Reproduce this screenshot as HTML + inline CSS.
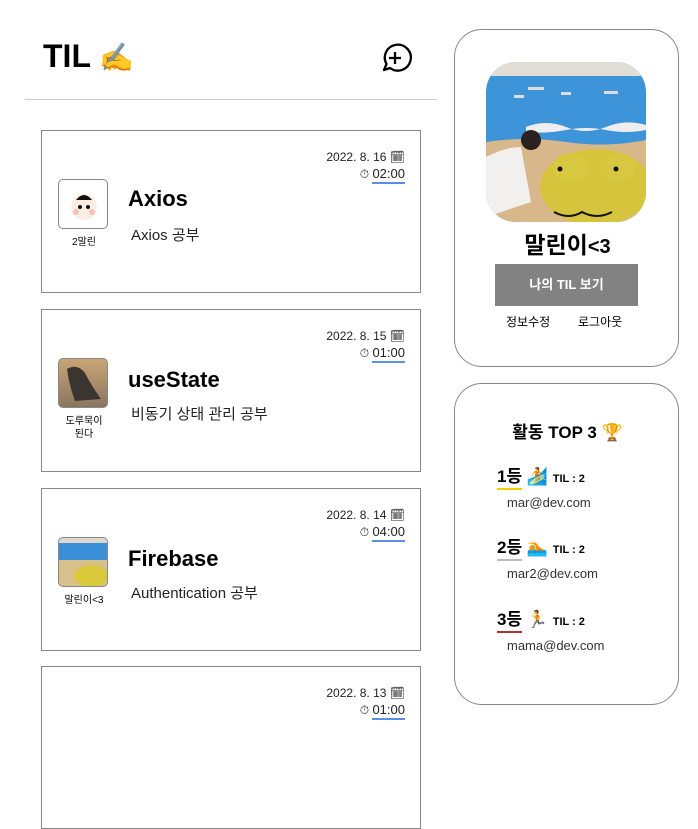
<!DOCTYPE html>
<html><head><meta charset="utf-8"><style>
*{margin:0;padding:0;box-sizing:border-box}
body{width:698px;height:722px;overflow:hidden;background:#fff;font-family:"Liberation Sans","Noto Sans CJK KR",sans-serif;color:#000;position:relative}
.a{position:absolute}
.card{position:absolute;left:41px;width:380px;height:163px;border:1px solid #888;background:#fff}
.av{position:absolute;left:16px;top:48px;width:50px;height:50px;border:1px solid #888;border-radius:5px;overflow:hidden}
.nm{position:absolute;left:10px;width:64px;text-align:center;font-size:10px;line-height:13px}
.tt{position:absolute;left:86px;font-size:22px;font-weight:bold}
.ds{position:absolute;left:89px;font-size:15px;color:#222}
.dt{position:absolute;right:15px;top:18px;font-size:12px;text-align:right;line-height:17px;color:#222}
.tm{display:inline-block;border-bottom:2px solid #5b8ee6;font-size:13px;line-height:16px}
.box{position:absolute;left:454px;width:225px;border:1px solid #888;border-radius:28px}
.rk{position:absolute;left:42px;font-size:17px;font-weight:bold}
.rk span.u{display:inline-block;padding-bottom:1px;border-bottom:2px solid}
.em{font-size:13px;color:#333;position:absolute;left:52px}
</style></head><body>
<div class="a" style="left:43px;top:38px;font-size:32px;font-weight:bold">TIL <span style="font-size:28px">✍️</span></div>
<svg class="a" style="left:378px;top:42px" width="34" height="34" viewBox="0 0 34 34"><path d="M6 28 L8.5 22 A13 13 0 1 1 12 26 Z" fill="none" stroke="#000" stroke-width="2.3" stroke-linejoin="round"/><path d="M17 10v12M11 16h12" stroke="#000" stroke-width="2.3"/></svg>
<div class="a" style="left:25px;top:99px;width:412px;height:1px;background:#ccc"></div>

<div class="card" style="top:130px">
<div class="dt">2022. 8. 16 🗓<br>⏱ <span class="tm">02:00</span></div>
<div class="av"><svg width="50" height="50"><circle cx="25" cy="27" r="13" fill="#fbeee0"/><path d="M17 20q8-10 16 0" fill="#111"/><circle cx="21" cy="27" r="2" fill="#111"/><circle cx="29" cy="27" r="2" fill="#111"/><circle cx="17" cy="32" r="3" fill="#f8c0c0"/><circle cx="33" cy="32" r="3" fill="#f8c0c0"/></svg></div>
<div class="nm" style="top:105px">2말린</div>
<div class="tt" style="top:55px">Axios</div>
<div class="ds" style="top:93px">Axios 공부</div>
</div>

<div class="card" style="top:309px">
<div class="dt">2022. 8. 15 🗓<br>⏱ <span class="tm">01:00</span></div>
<div class="av" style="background:linear-gradient(#c9a575,#8a7660)"><svg width="50" height="50"><path d="M8 10q10-6 18 4q6 12 16 26l-26 2q-6-16-8-32z" fill="#3a3530"/></svg></div>
<div class="nm" style="top:105px">도루묵이<br>된다</div>
<div class="tt" style="top:57px">useState</div>
<div class="ds" style="top:93px">비동기 상태 관리 공부</div>
</div>

<div class="card" style="top:488px">
<div class="dt">2022. 8. 14 🗓<br>⏱ <span class="tm">04:00</span></div>
<div class="av" style="background:#3a8fd6"><svg width="50" height="50"><rect y="22" width="50" height="28" fill="#d8c08a"/><ellipse cx="32" cy="38" rx="17" ry="11" fill="#d8c83a"/><rect x="0" y="0" width="50" height="5" fill="#e0d8d0"/></svg></div>
<div class="nm" style="top:105px">말린이&lt;3</div>
<div class="tt" style="top:57px">Firebase</div>
<div class="ds" style="top:93px">Authentication 공부</div>
</div>

<div class="card" style="top:666px">
<div class="dt">2022. 8. 13 🗓<br>⏱ <span class="tm">01:00</span></div>
</div>

<div class="box" style="top:29px;height:338px">
<div class="a" style="left:31px;top:32px;width:160px;height:160px;border-radius:30px;overflow:hidden;background:#3d94d8">
<svg width="160" height="160"><rect width="160" height="14" fill="#e2dcd6"/><rect x="42" y="25" width="16" height="3" fill="#ddd"/><rect x="28" y="33" width="10" height="3" fill="#ddd"/><rect x="75" y="30" width="10" height="3" fill="#ddd"/><rect x="118" y="29" width="14" height="3" fill="#ddd"/><path d="M40 65q20-8 40 0t40 0t40-2v5q-20 4-40 0t-40 0t-40 2z" fill="#eee"/><path d="M0 80q40-6 80 0t80-2v82h-160z" fill="#d8b88a"/><ellipse cx="110" cy="125" rx="56" ry="38" fill="#d6c43c"/><ellipse cx="85" cy="105" rx="18" ry="14" fill="#d8c840"/><ellipse cx="132" cy="105" rx="18" ry="14" fill="#d8c840"/><circle cx="74" cy="107" r="2.5" fill="#111"/><circle cx="130" cy="107" r="2.5" fill="#111"/><path d="M68 150q15 8 28 0q15 8 30 0" fill="none" stroke="#111" stroke-width="2"/><path d="M0 95q20-10 35-10l10 55l-45 15z" fill="#f2f0ee"/><circle cx="45" cy="78" r="10" fill="#2a2220"/></svg></div>
<div class="a" style="left:0;width:225px;top:196px;text-align:center;font-size:23px;font-weight:bold">말린이<span style="font-size:20px">&lt;3</span></div>
<div class="a" style="left:40px;top:234px;width:143px;height:42px;background:#828282;color:#fff;font-size:13px;font-weight:bold;text-align:center;line-height:42px">나의 TIL 보기</div>
<div class="a" style="left:51px;top:283px;font-size:12px">정보수정</div>
<div class="a" style="left:123px;top:283px;font-size:12px">로그아웃</div>
</div>

<div class="box" style="top:383px;height:322px">
<div class="a" style="left:0;width:225px;top:34px;text-align:center;font-size:17px;font-weight:bold">활동 TOP 3 🏆</div>
<div class="rk" style="top:78px"><span class="u" style="border-color:#f3cf00">1등</span> 🏄 <span style="font-size:11px">TIL : 2</span></div>
<div class="em" style="top:111px">mar@dev.com</div>
<div class="rk" style="top:149px"><span class="u" style="border-color:#bbb">2등</span> 🏊 <span style="font-size:11px">TIL : 2</span></div>
<div class="em" style="top:182px">mar2@dev.com</div>
<div class="rk" style="top:221px"><span class="u" style="border-color:#a33">3등</span> 🏃 <span style="font-size:11px">TIL : 2</span></div>
<div class="em" style="top:254px">mama@dev.com</div>
</div>
</body></html>
